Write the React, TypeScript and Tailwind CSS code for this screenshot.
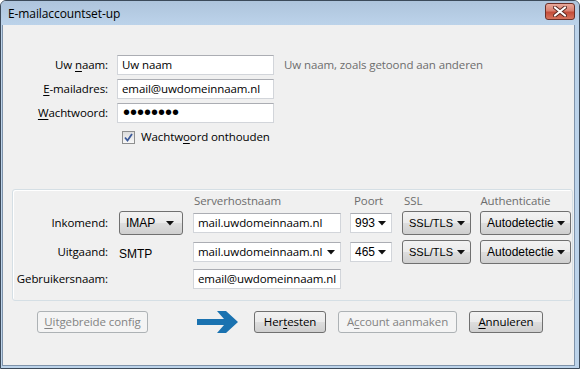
import React from "react";

const seg = { fontFamily: '"Open Sans", "Noto Sans", sans-serif' };
const ari = { fontFamily: '"Liberation Sans", Arial, sans-serif' };

const Arrow = () => (
  <svg width="8" height="5" viewBox="0 0 8 5" className="shrink-0">
    <path d="M0 0 L8 0 L4 4.5 Z" fill="#111" />
  </svg>
);

const btnBg =
  "bg-[linear-gradient(to_bottom,#f2f2f2_0%,#ebebeb_48%,#dddddd_52%,#cfcfcf_100%)]";

function Input({ children, w, arrow, arial }: { children: React.ReactNode; w: string; arrow?: boolean; arial?: boolean }) {
  return (
    <div
      className={`${w} h-[20px] shrink-0 bg-white border border-[#d2d5da] border-t-[#abadb3] flex items-center justify-between pl-[4px] pr-[5px] text-black ${
        arial ? "text-[12px] tracking-normal" : "text-[11.5px] tracking-[-0.1px]"
      }`}
      style={arial ? ari : seg}
    >
      <span className="whitespace-nowrap leading-none">{children}</span>
      {arrow && <Arrow />}
    </div>
  );
}

function DropBtn({ children, w, ml, size }: { children: React.ReactNode; w: string; ml: string; size: string }) {
  return (
    <div
      className={`${w} ${ml} h-[24px] shrink-0 rounded-[3px] border border-[#707070] ${btnBg} flex items-center justify-between pl-[6px] pr-[5px] ${size} tracking-normal text-black`}
      style={ari}
    >
      <span className="whitespace-nowrap leading-none">{children}</span>
      <Arrow />
    </div>
  );
}

function Btn({ children, w, ml, disabled }: { children: React.ReactNode; w: string; ml: string; disabled?: boolean }) {
  return (
    <div
      className={`${w} ${ml} h-[22px] shrink-0 rounded-[3px] border flex items-center justify-center ${
        disabled ? "border-[#adb2b5] bg-[#f4f4f4] text-[#838383]" : `border-[#707070] ${btnBg} text-black`
      }`}
      style={seg}
    >
      <span className="whitespace-nowrap leading-none">{children}</span>
    </div>
  );
}

const U = ({ c }: { c: string }) => <span className="underline underline-offset-[2px]">{c}</span>;

export default function App() {
  return (
    <div
      className="w-[580px] h-[369px] flex flex-col bg-[#bcd3ea] border border-[#3c4a5a] rounded-t-[6px] overflow-hidden text-[11.5px] tracking-[-0.1px]"
      style={seg}
    >
      {/* title bar */}
      <div className="h-[24px] shrink-0 flex items-center justify-between bg-[linear-gradient(to_bottom,#aec4dc,#bcd3ea)] pl-[7px] pr-[4px]">
        <span className="text-[12px] text-black leading-none mt-[1px]">E-mailaccountset-up</span>
        <div className="w-[30px] h-[17px] mt-[-3px] rounded-[3px] border border-[#6b2f28] bg-[linear-gradient(to_bottom,#e9a99b_0%,#d98070_45%,#c44d3a_55%,#d7745e_100%)] flex items-center justify-center">
          <svg width="14" height="11" viewBox="0 0 14 11">
            <path d="M2 1.5 L12 9.5 M12 1.5 L2 9.5" stroke="#5a2a24" strokeWidth="4" strokeLinecap="round" />
            <path d="M2 1.5 L12 9.5 M12 1.5 L2 9.5" stroke="#ffffff" strokeWidth="2.2" strokeLinecap="round" />
          </svg>
        </div>
      </div>

      {/* body */}
      <div className="flex-1 ml-[1px] mr-[4px] mb-[2px] bg-[#f0f0f0] border-l border-r border-b border-[#7f93aa] flex flex-col text-black">
        {/* top fields */}
        <div className="pt-[30px] flex flex-col gap-[4px]">
          <div className="flex items-center h-[20px]">
            <div className="w-[105px] text-right leading-none">Uw <U c="n" />aam:</div>
            <div className="ml-[9px]">
              <Input w="w-[157px]">Uw naam</Input>
            </div>
            <div className="ml-[10px] text-[#6d6d6d] leading-none whitespace-nowrap">Uw naam, zoals getoond aan anderen</div>
          </div>
          <div className="flex items-center h-[20px]">
            <div className="w-[105px] text-right leading-none"><U c="E" />-mailadres:</div>
            <div className="ml-[9px]">
              <Input w="w-[157px]">email@uwdomeinnaam.nl</Input>
            </div>
          </div>
          <div className="flex items-center h-[20px]">
            <div className="w-[105px] text-right leading-none"><U c="W" />achtwoord:</div>
            <div className="ml-[9px]">
              <Input w="w-[157px]" arial>
                <span className="text-[20px] leading-none relative top-[-1px] left-[1px]">••••••••</span>
              </Input>
            </div>
          </div>
          <div className="flex items-center h-[14px] mt-[3px] ml-[119px]">
            <div className="w-[13px] h-[13px] border border-[#8e8f8f] bg-[linear-gradient(to_bottom,#dcdcdc,#f8f8f8)] flex items-center justify-center">
              <svg width="9" height="9" viewBox="0 0 9 9">
                <path d="M1 4.5 L3.5 7.5 L8 1" stroke="#3c5a9a" strokeWidth="1.8" fill="none" />
              </svg>
            </div>
            <span className="ml-[6px] leading-none">Wachtw<U c="o" />ord onthouden</span>
          </div>
        </div>

        {/* group box */}
        <div className="mt-[45px] ml-[9px] mr-[1px] h-[112px] border border-[#d5dfe5] rounded-[3px] shadow-[inset_1px_1px_0_#ffffff] flex flex-col">
          <div className="flex items-center h-[21px] text-[#6d6d6d] leading-none whitespace-nowrap">
            <span className="ml-[181px]">Serverhostnaam</span>
            <span className="ml-[73px]">Poort</span>
            <span className="ml-[21px]">SSL</span>
            <span className="ml-[58px]">Authenticatie</span>
          </div>
          <div className="flex items-center h-[24px]">
            <div className="w-[95px] text-right leading-none">Inkomend:</div>
            <div className="ml-[11px] w-[64px] h-[24px] shrink-0 rounded-[3px] border border-[#707070] bg-[linear-gradient(to_bottom,#f2f2f2_0%,#ebebeb_48%,#dddddd_52%,#cfcfcf_100%)] flex items-center justify-between pl-[6px] pr-[8px]">
              <span className="leading-none text-[12px] tracking-normal" style={ari}>IMAP</span>
              <Arrow />
            </div>
            <div className="ml-[10px]">
              <Input w="w-[148px]">mail.uwdomeinnaam.nl</Input>
            </div>
            <div className="ml-[9px]">
              <Input w="w-[42px]" arrow arial>993</Input>
            </div>
            <DropBtn w="w-[69px]" ml="ml-[10px]" size="text-[11px]">SSL/TLS</DropBtn>
            <DropBtn w="w-[91px]" ml="ml-[9px]" size="text-[12px]">Autodetectie</DropBtn>
          </div>
          <div className="flex items-center h-[24px] mt-[5px]">
            <div className="w-[95px] text-right leading-none">Uitgaand:</div>
            <div className="ml-[11px] w-[64px] shrink-0 leading-none mt-[3px] text-[12px] tracking-normal" style={ari}>SMTP</div>
            <div className="ml-[10px]">
              <Input w="w-[148px]" arrow>mail.uwdomeinnaam.nl</Input>
            </div>
            <div className="ml-[9px]">
              <Input w="w-[42px]" arrow arial>465</Input>
            </div>
            <DropBtn w="w-[69px]" ml="ml-[10px]" size="text-[11px]">SSL/TLS</DropBtn>
            <DropBtn w="w-[91px]" ml="ml-[9px]" size="text-[12px]">Autodetectie</DropBtn>
          </div>
          <div className="flex items-center h-[20px] mt-[5px]">
            <div className="w-[95px] text-right leading-none whitespace-nowrap">Gebruikersnaam:</div>
            <div className="ml-[85px]">
              <Input w="w-[148px]">email@uwdomeinnaam.nl</Input>
            </div>
          </div>
        </div>

        {/* buttons */}
        <div className="flex items-center mt-[10px] h-[22px]">
          <Btn w="w-[111px]" ml="ml-[34px]" disabled>
            <U c="U" />itgebreide config
          </Btn>
          <svg width="42" height="22" viewBox="0 0 42 22" className="ml-[49px] shrink-0">
            <path d="M0 8 L27 8 L20 0 L29 0 L41 11 L29 22 L20 22 L27 14 L0 14 Z" fill="#1a72b0" />
          </svg>
          <Btn w="w-[72px]" ml="ml-[15px]">
            Her<U c="t" />esten
          </Btn>
          <Btn w="w-[119px]" ml="ml-[12px]" disabled>
            A<U c="c" />count aanmaken
          </Btn>
          <Btn w="w-[74px]" ml="ml-[12px]">
            <U c="A" />nnuleren
          </Btn>
        </div>
      </div>
    </div>
  );
}
